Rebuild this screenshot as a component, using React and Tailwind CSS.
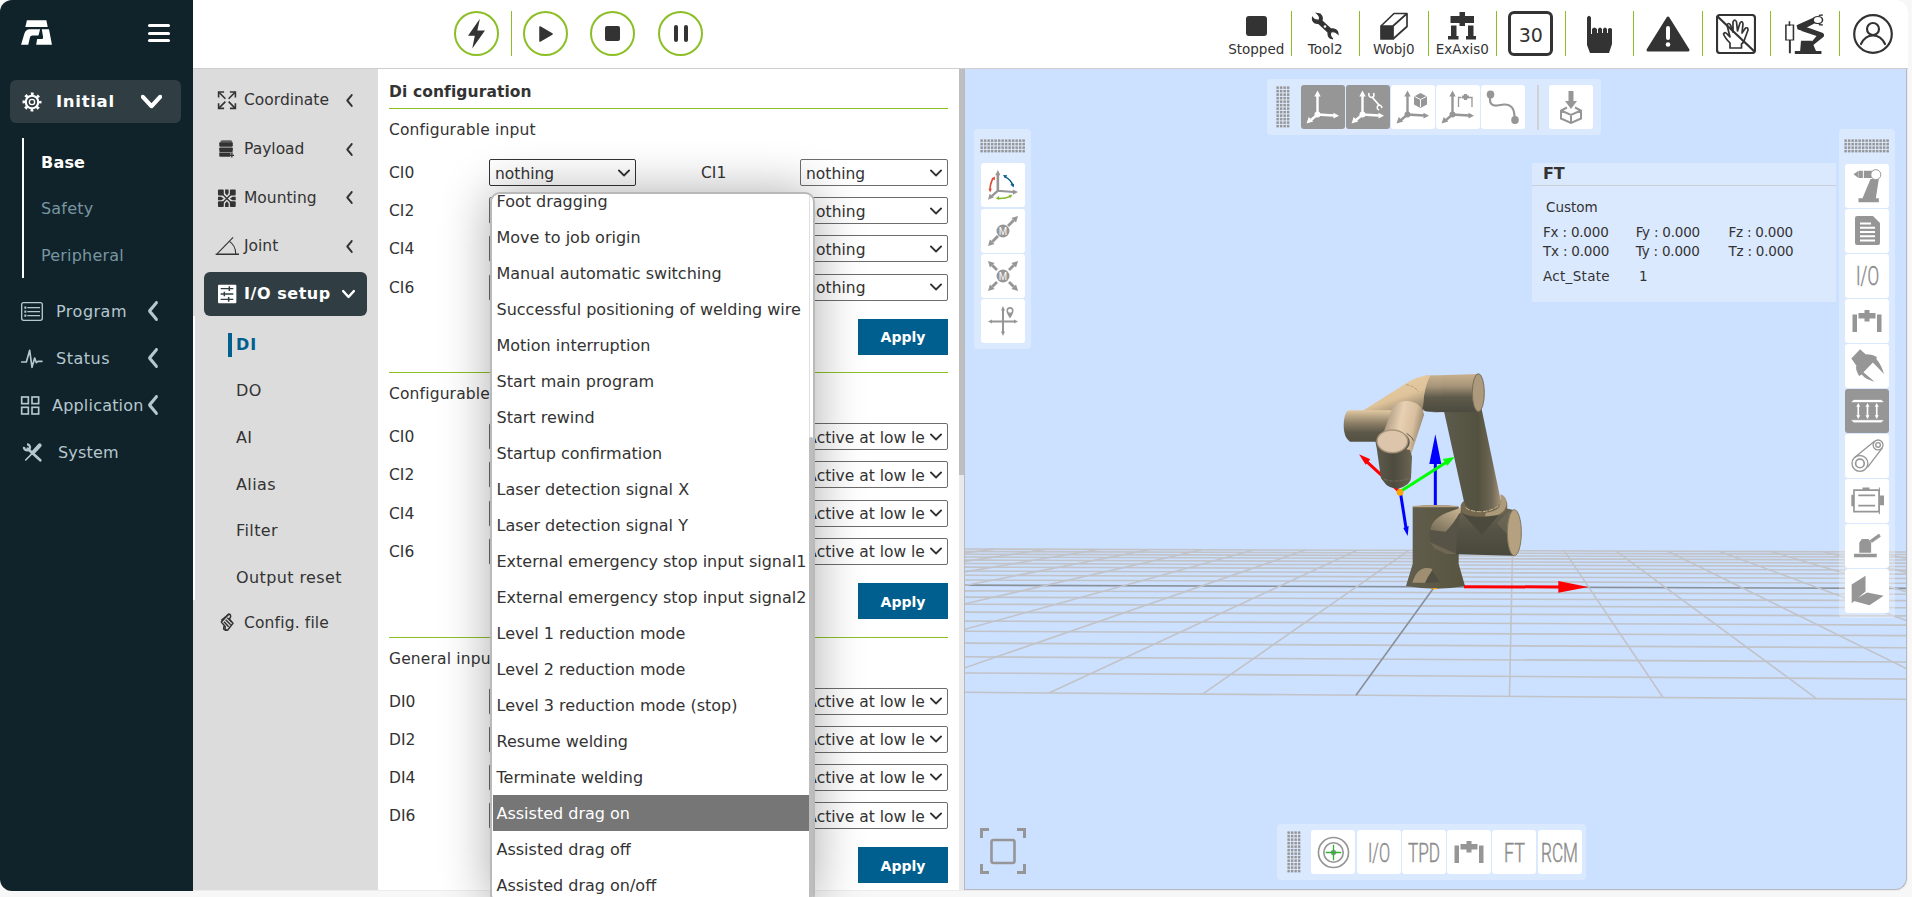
import React from "react";

const G = "#969696";
const D = "#333333";

/* ---------- shared bits ---------- */
function Chevron({ className, dir = "left", w = 3 }) {
  return (
    <svg viewBox="0 0 24 24" className={className} fill="none" stroke="currentColor" strokeWidth={w} strokeLinecap="round" strokeLinejoin="round" preserveAspectRatio="none">
      {dir === "left" ? <path d="M18 2 L6 12 L18 22" /> : <path d="M2 6 L12 18 L22 6" />}
    </svg>
  );
}

/* ---------- left navigation ---------- */
const ProgramIcon = () => (
  <svg viewBox="60 30 72 64" className="w-6 h-[21.3px]" fill="none" stroke="currentColor" strokeWidth="4">
    <rect x="65" y="35" width="62" height="53" rx="6" />
    <path d="M73 50h6M73 62h6M73 74h6" strokeWidth="7" />
    <path d="M82 50h38M82 62h38M82 74h38" strokeWidth="3.5" />
  </svg>
);
const StatusIcon = () => (
  <svg viewBox="60 170 72 64" className="w-6 h-[21.3px]" fill="none" stroke="currentColor" strokeWidth="5" strokeLinejoin="round" strokeLinecap="round">
    <path d="M65 212h14l10-35 7 51 8-28 5 14 5-4h12" />
  </svg>
);
const AppIcon = () => (
  <svg viewBox="60 312 72 64" className="w-6 h-[21.3px]" fill="none" stroke="currentColor" strokeWidth="5">
    <rect x="65" y="318" width="20" height="20" />
    <rect x="96" y="318" width="20" height="20" />
    <rect x="65" y="349" width="20" height="20" />
    <rect x="96" y="349" width="20" height="20" />
  </svg>
);
const SystemIcon = () => (
  <svg viewBox="60 456 72 64" className="w-6 h-[21.3px]" fill="none" stroke="currentColor">
    <path d="M83 476 L121 511" strokeWidth="8" strokeLinecap="round" />
    <path d="M81 463 a9 9 0 1 1 -9 8" strokeWidth="7" />
    <path d="M77 510 L98 489" strokeWidth="5" strokeLinecap="round" />
    <path d="M98 489 L119 466" strokeWidth="12" strokeLinecap="round" />
  </svg>
);

function NavRow({ icon, label, arrow, pad }) {
  return (
    <div className="relative flex h-[47px] items-center pl-5 text-[#b5c7cf]">
      {icon}
      <span className={pad}>{label}</span>
      {arrow && <Chevron w={4.5} className="absolute left-[146px] top-[13px] h-[20px] w-[14px]" />}
    </div>
  );
}

function Sidebar() {
  return (
    <aside className="flex w-[193px] shrink-0 flex-col bg-[#11232a] text-[16px] tracking-[0.2px]">
      <div className="flex h-[80px] items-start justify-between pl-[21px] pr-[23px] pt-5">
        <svg viewBox="0 0 94 76" className="h-[25px] w-[31px]" fill="#fff">
          <path d="M18 1h59l4 20H13z" />
          <path d="M10 42q4-14 17-14h31l-5 19H35q-7 0-8 6l-5 22H0z" />
          <path d="M63 28h22l9 47H46l3-17h15q4 0 3-6z" />
        </svg>
        <div className="flex flex-col gap-[4.5px] pt-1">
          <div className="h-[3px] w-[22px] rounded bg-white" />
          <div className="h-[3px] w-[22px] rounded bg-white" />
          <div className="h-[3px] w-[22px] rounded bg-white" />
        </div>
      </div>
      <div className="ml-[10px] flex h-[43px] w-[171px] items-center rounded-md bg-[#303e43] pl-3 font-bold text-white">
        <svg viewBox="-12 -12 24 24" className="h-5 w-5" fill="none" stroke="#fff">
          <circle r="7.5" strokeWidth="2.6" />
          <circle r="3.2" strokeWidth="1.6" />
          <circle r="9.8" strokeWidth="3.2" strokeDasharray="3.4 4.3" strokeDashoffset="1.7" />
        </svg>
        <span className="w-[99px] pl-[14px] text-[16.5px] tracking-[0.7px]">Initial</span>
        <Chevron dir="down" w={5} className="h-[19px] w-[21px]" />
      </div>
      <div className="ml-[22px] mt-[15px] flex h-[140px] flex-col border-l-2 border-white pl-[17px] text-[#7796a1]">
        <div className="h-[47px] pt-[13px] font-bold text-white">Base</div>
        <div className="h-[47px] pt-[12px]">Safety</div>
        <div className="pt-[12px]">Peripheral</div>
      </div>
      <div className="pt-[10px]">
        <NavRow icon={<ProgramIcon />} label="Program" arrow pad="pl-3 tracking-[0.5px]" />
        <NavRow icon={<StatusIcon />} label="Status" arrow pad="pl-3 tracking-[0.5px]" />
        <NavRow icon={<AppIcon />} label="Application" arrow pad="pl-[8px]" />
        <NavRow icon={<SystemIcon />} label="System" pad="pl-[14px]" />
      </div>
    </aside>
  );
}

/* ---------- second level menu ---------- */
const CoordIcon = () => (
  <svg viewBox="650 270 62 60" className="h-5 w-5" fill="none" stroke={D} strokeWidth="5">
    <path d="M655 292V275h17M690 275h17v17M707 310v16h-17M672 326h-17v-16" />
    <path d="M656 276l20 20M706 276l-20 20M706 325l-20-20M656 325l20-20" />
  </svg>
);
const PayloadIcon = () => (
  <svg viewBox="650 414 62 60" className="h-5 w-5" fill={D}>
    <path d="M660 424q0-7 7-7h24q7 0 7 7z" opacity=".75" />
    <rect x="657" y="423" width="42" height="14" rx="3" />
    <rect x="657" y="439" width="42" height="14" rx="3" />
    <path d="M657 455h42v3h-8v10h-31q-3 0-3-3z" />
    <path d="M696 457v13M689 464h14" stroke={D} strokeWidth="4" />
  </svg>
);
const MountIcon = () => (
  <svg viewBox="650 560 62 60" className="h-5 w-5" fill={D}>
    <rect x="653" y="564" width="18" height="18" rx="3" />
    <rect x="690" y="564" width="18" height="18" rx="3" />
    <rect x="653" y="600" width="18" height="18" rx="3" />
    <rect x="690" y="600" width="18" height="18" rx="3" />
    <path d="M675 564h11v11l-5 7-6-7zM675 618h11v-11l-5-7-6 7zM653 586v11h10l8-5-8-6zM708 586v11h-10l-8-5 8-6z" />
    <path d="M668 579l25 25M693 579l-25 25" stroke={D} strokeWidth="4" />
  </svg>
);
const JointIcon = () => (
  <svg viewBox="643 705 76 60" className="h-5 w-[25px]" fill="none" stroke={D}>
    <path d="M645 760h71" strokeWidth="4.5" />
    <path d="M650 758l48-49" strokeWidth="3.5" />
    <path d="M687 721q19 13 19 38" strokeWidth="3.5" />
  </svg>
);
const IoIcon = () => (
  <svg viewBox="650 850 60 60" className="h-5 w-5">
    <rect x="653" y="852" width="55" height="56" rx="3" fill="#fff" />
    <path d="M661 864h38M661 880h38M661 896h38" stroke="#303e43" strokeWidth="4" />
    <path d="M687 857v14M672 873v14M685 889v14" stroke="#303e43" strokeWidth="4.5" />
  </svg>
);
const ConfigIcon = () => (
  <svg viewBox="650 965 60 60" className="h-5 w-5" fill="none" stroke={D} strokeWidth="4.5" strokeLinejoin="round">
    <path d="M685 968q6 0 6 8l-4 8 11 12-16 20q-6 2-8-5l1-5-12-14z" />
    <path d="M663 987l22-18M671 991l14 15M676 985l15 15M671 1004l-1 9q4 5 10 3M681 979l13 13" />
  </svg>
);

function MenuRow({ icon, label, arrow, tight, h = "h-[48.7px]" }) {
  return (
    <div className={"flex items-center text-[#333] " + h}>
      <div className={tight ? "w-[29px]" : "w-[27px]"}>{icon}</div>
      <span className="w-[101px]">{label}</span>
      {arrow && <Chevron w={4.5} className="h-[13px] w-[9px]" />}
    </div>
  );
}

function SubMenu() {
  return (
    <div className="w-[185px] shrink-0 bg-[#dcdcdc]">
      <div className="flex h-[203px] flex-col pl-[24px] pt-[7px]">
        <MenuRow icon={<CoordIcon />} label="Coordinate" arrow />
        <MenuRow icon={<PayloadIcon />} label="Payload" arrow />
        <MenuRow icon={<MountIcon />} label="Mounting" arrow />
        <div className="-ml-[2px]"><MenuRow icon={<JointIcon />} label="Joint" arrow tight /></div>
      </div>
      <div className="ml-[11px] flex h-[44px] w-[163px] items-center rounded-md bg-[#303e43] pl-[13px] font-bold text-white">
        <IoIcon />
        <span className="w-[105px] whitespace-nowrap pl-[7px] text-[16px] tracking-[0.55px]">I/O setup</span>
        <Chevron dir="down" w={4.5} className="h-[12px] w-[13px]" />
      </div>
      <div className="flex h-[284px] flex-col border-l-2 border-white pl-[33px] pt-[5px] text-[16px] text-[#333]">
        <div className="mt-3 flex h-6 items-center border-l-4 border-[#005f8f] pl-[4px] font-bold tracking-[1px] text-[#005f8f]">DI</div>
        <div className="flex flex-col pl-2 pt-[11px]">
          {["DO", "AI", "Alias", "Filter", "Output reset"].map((t) => (
            <div key={t} className="flex h-[46.7px] items-center tracking-[0.4px]">{t}</div>
          ))}
        </div>
      </div>
      <div className="pl-[24px] tracking-[0.15px]">
        <MenuRow icon={<ConfigIcon />} label="Config. file" h="h-[45px]" />
      </div>
    </div>
  );
}

/* ---------- configuration panel ---------- */
function Select({ value, dark }) {
  return (
    <div className={"flex h-[27px] items-center justify-between rounded-[2px] border bg-white pl-[5px] pr-[5px] text-[#333] " + (dark ? "w-[147px] border-[#333]" : "w-[148px] border-[#6d6d6d]")}>
      <span className="w-[119px] overflow-hidden whitespace-nowrap pt-[2px]">{value}</span>
      <Chevron dir="down" w={4.5} className="h-[10px] w-[12px] shrink-0" />
    </div>
  );
}

function Section({ title, labels, value, second }) {
  return (
    <div className="flex h-[264.3px] flex-col border-b border-[#8cbf26]">
      <div className="h-[50px] pt-[9px] tracking-[0.15px]">{title}</div>
      {labels.map((l, i) => (
        <div key={l} className="flex h-[38.2px] shrink-0 items-start">
          <span className="w-[100px] pt-[2px]">{l}</span>
          <Select value={i === 0 && second ? value : ""} dark={i === 0 && second} />
          <span className="w-[164px] pl-[65px] pt-[2px]">{i === 0 && second ? "CI1" : ""}</span>
          <Select value={value} />
        </div>
      ))}
      <div className="ml-auto mt-[7px] flex h-[36px] w-[90px] items-center justify-center bg-[#005f8f] pt-px text-[14px] font-bold text-white">Apply</div>
    </div>
  );
}

const OPTIONS = [
  "Foot dragging", "Move to job origin", "Manual automatic switching", "Successful positioning of welding wire",
  "Motion interruption", "Start main program", "Start rewind", "Startup confirmation", "Laser detection signal X",
  "Laser detection signal Y", "External emergency stop input signal1", "External emergency stop input signal2",
  "Level 1 reduction mode", "Level 2 reduction mode", "Level 3 reduction mode (stop)", "Resume welding",
  "Terminate welding", "Assisted drag on", "Assisted drag off", "Assisted drag on/off",
];

function OptionList() {
  return (
    <div className="absolute left-[489.5px] top-[192px] z-20 flex h-[712px] w-[325px] overflow-hidden rounded-[10px] border-2 border-[#b9b9b9] bg-white shadow-[0_0_50px_rgba(0,0,0,0.33)]">
      <ul className="-mt-[11px] w-[318px] pl-px text-[16px] text-[#333]">
        {OPTIONS.map((o) => (
          <li key={o} className={"flex h-9 items-center whitespace-nowrap pl-1 pt-[2px] " + (o === "Assisted drag on" ? "bg-[#767676] text-white" : "")}>{o}</li>
        ))}
      </ul>
      <div className="flex w-[4px] flex-col border-l border-[#e0e0e0] pt-[243px]">
        <div className="-ml-px w-[4px] grow rounded-t bg-[#bdbdbd]" />
      </div>
    </div>
  );
}

function ConfigPanel() {
  return (
    <div className="flex w-[586px] shrink-0 overflow-hidden bg-white text-[#333]">
      <div className="w-[581px] shrink-0 pl-[11px] pr-[11px]">
        <div className="flex h-[40px] items-center border-b border-[#8cbf26] pt-[7px] text-[15.5px] font-bold tracking-[0.1px]">Di configuration</div>
        <Section title="Configurable input" labels={["CI0", "CI2", "CI4", "CI6"]} value="nothing" second />
        <Section title="Configurable input" labels={["CI0", "CI2", "CI4", "CI6"]} value="Active at low level" />
        <div className="h-[250px] overflow-hidden">
          <Section title="General input" labels={["DI0", "DI2", "DI4", "DI6"]} value="Active at low level" />
        </div>
      </div>
      <div className="w-[5px] bg-[#e9e9e9]">
        <div className="h-[406px] bg-[#bfbfbf]" />
      </div>
    </div>
  );
}

/* ---------- top bar ---------- */
function Round({ children, className }) {
  return (
    <div className={"flex h-[45px] w-[45px] items-center justify-center rounded-full border-2 border-[#8cbf26] " + className}>{children}</div>
  );
}

function Cell({ children, first }) {
  return (
    <div className={"flex h-[45px] w-[68.5px] shrink-0 flex-col items-center justify-center " + (first ? "" : "border-l border-[#8cbf26]")}>{children}</div>
  );
}

function Labeled({ icon, label }) {
  return (
    <div className="flex flex-col items-center pt-[3px]">
      <div className="flex h-[28px] items-center">{icon}</div>
      <div className="text-[13.5px] leading-[18px] text-[#333]">{label}</div>
    </div>
  );
}

function TopBar() {
  return (
    <header className="flex h-[69px] shrink-0 border-b border-[#d0cdd0] bg-white pt-[11px]">
      <Round className="ml-[261px]">
        <svg viewBox="0 0 20 36" className="h-[34px] w-[17px]" fill={D}><path d="M14 0 L0 20 H8 L5 35 L20 14 H11 Z" /></svg>
      </Round>
      <div className="ml-[12px] h-[45px] w-px bg-[#8cbf26]" />
      <Round className="ml-[11px]">
        <svg viewBox="0 0 14 16" className="h-[16px] w-[14px]" fill={D} stroke={D} strokeWidth="1.5" strokeLinejoin="round"><path d="M1 1 L13 8 L1 15Z" /></svg>
      </Round>
      <Round className="ml-[22px]"><div className="h-[15px] w-[15px] rounded-[2px] bg-[#333]" /></Round>
      <Round className="ml-[23px]">
        <div className="flex gap-[6px]"><div className="h-[17px] w-[4px] rounded bg-[#333]" /><div className="h-[17px] w-[4px] rounded bg-[#333]" /></div>
      </Round>
      <div className="ml-auto flex w-[686px]">
        <Cell first><Labeled label="Stopped" icon={<div className="h-5 w-[21px] rounded-[3px] bg-[#333]" />} /></Cell>
        <Cell>
          <Labeled label="Tool2" icon={
            <svg viewBox="0 0 28 28" className="h-[28px] w-[28px]" fill="none" stroke={D}>
              <path d="M8 9 L20 20" strokeWidth="5.5" />
              <path d="M6 1.5 Q10 5 8 8 Q4 9 1.5 5.5 Q1 9 4 11 Q8 12 10 10 Q13 6 9 2Z M22 27 Q18 24 20 20 Q24 19 27 22 Q27 18 23 17 Q19 16 17.500 19 Q16 24 19 26Z" fill={D} strokeWidth="1.2" />
              <circle cx="14" cy="14.500" r="1.300" fill="#fff" stroke="none" />
            </svg>} />
        </Cell>
        <Cell>
          <Labeled label="Wobj0" icon={
            <svg viewBox="0 0 28 28" className="h-[28px] w-[28px]" fill="none" stroke={D} strokeWidth="1.700" strokeLinejoin="round">
              <rect x="1" y="14" width="12" height="13" fill={D} />
              <path d="M1 14 L14 1.500 H27 V14.500 L13 27 M13 14 L27 1.500" />
            </svg>} />
        </Cell>
        <Cell>
          <Labeled label="ExAxis0" icon={
            <svg viewBox="0 0 28 28" className="h-[28px] w-[28px]" fill={D}>
              <path d="M11.500 0h5.500v4h9v7h-9v3h-5.500v-3H2.500V4h9zM3 13.500h5.500v10.500h2v3.500H0v-3.500h3zM20 13.500h5.500v10.500H28v3.500H18v-3.500h2z" />
            </svg>} />
        </Cell>
        <Cell>
          <div className="flex h-[45px] w-[45px] items-center justify-center rounded-md border-[3px] border-[#333] pt-[2px] text-[19px] text-[#333]">30</div>
        </Cell>
        <Cell>
          <svg viewBox="0 0 26 38" className="h-[38px] w-[26px]" fill={D}>
            <path d="M1 2.500Q3 -1 5 2.500V19h1V14q2-3 5 0v4h1v-4q2-3 4 0v4h1v-4q2-3 4 0v4h1v-4q2-2 4 0V29L23 38H4L1 30z" />
          </svg>
        </Cell>
        <Cell>
          <svg viewBox="0 0 44 36" className="h-[36px] w-[44px]">
            <path d="M22 2 L42 34 H2 Z" fill={D} stroke={D} strokeWidth="3" strokeLinejoin="round" />
            <path d="M22 12v10" stroke="#fff" strokeWidth="4" strokeLinecap="round" />
            <circle cx="22" cy="28.500" r="2.300" fill="#fff" />
          </svg>
        </Cell>
        <Cell>
          <svg viewBox="0 0 40 40" className="h-10 w-10" fill="none" stroke={D} strokeWidth="1.700" strokeLinejoin="round">
            <rect x="1" y="1" width="38" height="38" rx="3" strokeWidth="2.200" />
            <path d="M14 34 V29 Q9 24 7.500 20 Q9 17 12 21 L14 23 L11 11 Q12.500 8 14.500 11 L17 18 L17 8 Q19 4 20.500 8 L21.500 17 L24 9 Q26.500 6 27 10 L26 19 L29.500 14 Q32 13 32 16 L28 27 Q27 29 25.500 30 V34 Z" />
            <path d="M1 2 L39 38" strokeWidth="2.200" />
          </svg>
        </Cell>
        <Cell>
          <svg viewBox="1286 42 90 120" className="h-10 w-10" fill={D} preserveAspectRatio="none">
            <path d="M1288 75h17v45h-17zM1296 64v14" fill="none" stroke={D} strokeWidth="3.500" />
            <path d="M1297 120v40" stroke={D} strokeWidth="4.500" />
            <path d="M1308 153h60v9h-60zM1322 122h24l10 32h-36z" />
            <path d="M1312 76l40-24 6 14-30 22q-8 4-14 0z" />
            <path d="M1318 76l22 8 30 14q6 4 3 12l-24 26h-6l4-12 10-16-32-14-10-8z" />
            <circle cx="1360" cy="60" r="10.500" fill="#fff" stroke={D} strokeWidth="3.500" />
            <path d="M1362 46l9-1M1362 74l9 1" stroke={D} strokeWidth="4" />
          </svg>
        </Cell>
        <Cell>
          <svg viewBox="0 0 40 40" className="h-10 w-10" fill="none" stroke={D} strokeWidth="2.200">
            <circle cx="20" cy="20" r="18.800" />
            <circle cx="20" cy="15" r="6" />
            <path d="M8 30 Q12 21.500 20 21.500 Q28 21.500 32 30" strokeLinecap="round" />
          </svg>
        </Cell>
      </div>
    </header>
  );
}

/* ---------- 3D scene ---------- */
const X0 = 965, X1 = 1906;
function rowY(i, near, far, h) {
  const a = 1 / (near - h), b = 1 / (far - h);
  return h + 1 / (a + ((b - a) * i) / 20);
}

function Scene() {
  const rows = Array.from({ length: 21 }, (_, i) => [rowY(i, 692.3, 549, 476), rowY(i, 699.3, 552, 480)]);
  const cols = Array.from({ length: 21 }, (_, i) => {
    const k = i - 11;
    const xn = 1509.5 + 153.5 * k, xf = 1512.5 + 51.8 * k;
    return [xn, 692.3 + ((xn - X0) * 7) / 941, xf, 549 + ((xf - X0) * 3) / 941];
  });
  return (
    <svg viewBox="965 69 941 820" className="h-[820px] w-[941px]">
      <defs>
        <linearGradient id="h1" x1="0" y1="0" x2="0" y2="1">
          <stop offset="0" stopColor="#c8b08c" /><stop offset=".3" stopColor="#a8967a" /><stop offset=".6" stopColor="#5f5b4c" /><stop offset="1" stopColor="#4b4a3f" />
        </linearGradient>
        <linearGradient id="h2" x1="0" y1="0" x2="0" y2="1">
          <stop offset="0" stopColor="#e0c8a2" /><stop offset=".4" stopColor="#8e8068" /><stop offset=".7" stopColor="#5d594a" /><stop offset="1" stopColor="#545141" />
        </linearGradient>
        <linearGradient id="d1" x1="0" y1="0" x2=".5" y2="1">
          <stop offset="0" stopColor="#ecd1a6" /><stop offset=".6" stopColor="#dfc49b" /><stop offset="1" stopColor="#7d725e" />
        </linearGradient>
        <linearGradient id="u1" x1="0" y1="0" x2="1" y2="0">
          <stop offset="0" stopColor="#5d5b4c" /><stop offset=".6" stopColor="#53513f" /><stop offset=".85" stopColor="#6e6755" /><stop offset="1" stopColor="#a18f74" />
        </linearGradient>
        <linearGradient id="w1" x1="0" y1=".3" x2="1" y2=".6">
          <stop offset="0" stopColor="#a59378" /><stop offset=".4" stopColor="#e8d0b4" /><stop offset=".7" stopColor="#d8bf9e" /><stop offset="1" stopColor="#7f735d" />
        </linearGradient>
        <linearGradient id="w2" x1="0" y1="0" x2="1" y2="0">
          <stop offset="0" stopColor="#5e5b4b" /><stop offset=".5" stopColor="#4d4b3f" /><stop offset="1" stopColor="#6b6451" />
        </linearGradient>
        <linearGradient id="b1" x1="0" y1="0" x2="1" y2="0">
          <stop offset="0" stopColor="#615e4e" /><stop offset="1" stopColor="#57543f" />
        </linearGradient>
        <linearGradient id="s1" x1="0" y1="0" x2="0" y2="1">
          <stop offset="0" stopColor="#6a6452" /><stop offset=".5" stopColor="#545244" /><stop offset="1" stopColor="#48483c" />
        </linearGradient>
        <linearGradient id="l1" x1="1" y1="0" x2=".2" y2="1">
          <stop offset="0" stopColor="#d6bf9b" /><stop offset="1" stopColor="#7b715c" />
        </linearGradient>
      </defs>
      <g stroke="#c1c3c7" strokeWidth="1.6" fill="none">
        {rows.map((r, i) => <line key={i} x1={X0} y1={r[0]} x2={X1} y2={r[1]} stroke={i === 10 ? "#8b9096" : undefined} />)}
        {cols.map((c, i) => <line key={i} x1={c[0]} y1={c[1]} x2={c[2]} y2={c[3]} stroke={i === 10 ? "#8b9096" : undefined} />)}
      </g>
      <g transform="translate(1300 350) scale(0.33333)">
        <path d="M406 470V335" stroke="#00f" strokeWidth="9" />
        <path d="M406 253l18 89h-36z" fill="#00f" />
        <path d="M295 422L196 331" stroke="#f00" strokeWidth="9" />
        <path d="M177 313l34 15-14 16z" fill="#f00" />
        {/* base and shoulder */}
        <path d="M338 470q68-8 138 0V642L495 708Q410 724 318 708L338 642z" fill="url(#b1)" />
        <path d="M338 468q68-6 138 0l-2 4H338z" fill="#b7a384" />
        <path d="M392 540Q392 510 440 488L482 473 500 470 480 545Q440 548 392 540z" fill="url(#l1)" />
        <path d="M478 490Q462 520 436 546L388 540 392 580 468 613 560 600V490z" fill="#575447" />
        <path d="M470 560L484 470H600L640 480V617L468 613z" fill="url(#s1)" />
        <path d="M388 576L470 612H440L405 596z" fill="#6d6754" />
        <path d="M337 698Q350 655 380 654 402 654 396 662 382 680 375 698z" fill="#a08e72" />
        <path d="M396 662l24 34-44 3z" fill="#504e41" />
        <path d="M590 520L630 480V560z" fill="#77705b" opacity=".5" />
        <ellipse cx="643" cy="548" rx="21" ry="69" fill="#b5a080" stroke="#82765f" strokeWidth="3" />
        {/* upper arm */}
        <path d="M482 475Q480 455 500 450H600Q622 440 622 468 622 490 590 498 560 506 520 501 485 495 482 475z" fill="#74694f" />
        <path d="M553 503q62-5 67-40 0-25-18-30l-2 35q-10 17-42 20z" fill="#ad9a7b" />
        <path d="M486 490q35 18 110 5l-50 60z" fill="#4b4a3d" />
        <path d="M432 184L545 178 600 440V462Q570 490 530 485 500 482 492 455z" fill="url(#u1)" />
        <path d="M497 473q15 12 45 12t58-20" fill="none" stroke="#cbb491" strokeWidth="3" strokeDasharray="14 4" />
        {/* elbow */}
        <path d="M375 77L535 72V184Q450 190 375 184L340 140z" fill="url(#h1)" />
        <ellipse cx="535" cy="128" rx="18" ry="57" fill="#ad997b" stroke="#786d58" strokeWidth="3" />
        {/* forearm */}
        <path d="M188 182L315 102Q350 78 392 76 372 110 370 165L368 184 290 210 240 212z" fill="url(#d1)" />
        <path d="M392 76Q376 100 374 150L365 180Q395 190 425 186V78z" fill="url(#h1)" opacity=".55" />
        <path d="M318 104q25 3 38 22" fill="none" stroke="#a18c6a" strokeWidth="2" strokeDasharray="10 4" />
        <path d="M146 181H282L300 215 246 275H150Q131 262 131 228 131 188 146 181z" fill="url(#h2)" />
        {/* wrist */}
        <path d="M278 172Q295 150 325 153 368 160 372 195L331 320 300 330 250 250z" fill="url(#w1)" />
        <path d="M228 280L330 300 336 320 333 385Q332 405 295 416 262 414 252 396L243 385z" fill="url(#w2)" />
        <ellipse cx="278" cy="277" rx="51" ry="35" fill="#59564a" />
        <ellipse cx="277" cy="274" rx="46" ry="34" fill="#dcc5aa" stroke="#a8967b" strokeWidth="4" />
        <path d="M320 250q18 12 21 22" stroke="#5f5b4b" strokeWidth="3" fill="none" />
        <path d="M252 388q35 12 78-4" stroke="#80765f" strokeWidth="2" fill="none" strokeDasharray="12 4" />
        {/* axes */}
        <path d="M300 425L440 336" stroke="#0f0" strokeWidth="9" />
        <path d="M464 321l-22 26-14-20z" fill="#0f0" />
        <path d="M302 432L319 540" stroke="#00f" strokeWidth="9" />
        <path d="M323 558l-13-24 16-6z" fill="#00f" />
        <circle cx="300" cy="427" r="10" fill="#ffa500" />
        <path d="M492 710L780 711" stroke="#f00" strokeWidth="9" />
        <path d="M775 693l90 18-90 17z" fill="#f00" />
        <path d="M398 716h13" stroke="#ffa500" strokeWidth="4" />
      </g>
    </svg>
  );
}

/* ---------- floating tool bars ---------- */
function Grip({ cols, rows }) {
  const w = cols * 3.5, h = rows * 3.5;
  return (
    <svg width={w} height={h} viewBox={"0 0 " + w + " " + h}>
      {Array.from({ length: cols * rows }, (_, i) => (
        <rect key={i} x={(i % cols) * 3.5 + 0.4} y={Math.floor(i / cols) * 3.5 + 0.4} width="2.500" height="2.500" fill={G} />
      ))}
    </svg>
  );
}

function Tool({ children, active }) {
  return (
    <div className={"flex h-[44px] w-[44px] shrink-0 items-center justify-center rounded-[3px] " + (active ? "bg-[#969696]" : "bg-white")}>{children}</div>
  );
}

function Axes({ c = G, children }) {
  return (
    <svg viewBox="0 0 34 34" className="h-[34px] w-[34px]" fill="none" stroke={c}>
      <path d="M11.500 5V24.500L28 25.500M11.500 24.500L5 30" strokeWidth="2.400" />
      <path d="M11.500 0.500l3.200 6h-6.400zM33 25.800l-5.500 2.800v-5.800zM0.500 33.500l2.200-6.500 4.600 4.600z" fill={c} stroke="none" />
      <circle cx="11.500" cy="24.500" r="3" fill={c} stroke="none" />
      {children}
    </svg>
  );
}

const Ext = () => (
  <svg viewBox="0 0 30 22" className="h-[22px] w-[30px]" fill={G}>
    <path d="M0.500 4.500h4.500v17.500H0.500zM25 4.500h4.500v17.500H25zM6.500 3h6V0h5v3h6v5.500h-6V11.500h-5V8.500h-6z" />
  </svg>
);

function Thin({ t, w, h = 19 }) {
  return (
    <svg width={w} height={h} viewBox={"0 0 " + w + " " + h} className="overflow-visible">
      <text x="0" y={h} textLength={w} lengthAdjust="spacingAndGlyphs" fontFamily="Roboto, sans-serif" fontSize={h * 1.4} fontWeight="300" fill="#8c8c8c" stroke="#8c8c8c" strokeWidth=".5">{t}</text>
    </svg>
  );
}

function TopTools() {
  return (
    <div className="absolute left-[302px] top-[10px] flex h-[56px] w-[334px] items-center gap-px rounded bg-white/30 pl-[9px]">
      <div className="mr-[10px]"><Grip cols={4} rows={12} /></div>
      <Tool active><Axes c="#fff" /></Tool>
      <Tool active>
        <Axes c="#fff">
          <path d="M21 7l7 8" strokeWidth="1.800" />
          <path d="M18 3q-1 4 3 4.500 3-1 1.500-4.500M31 18q-1-4-4-2.500-2 3 1 4.500" strokeWidth="1.600" />
        </Axes>
      </Tool>
      <Tool><Axes><path d="M24.500 3l6.500 3.500v8L24.500 18l-6.500-3.500v-8z" fill={G} stroke="none" /><path d="M18.500 6.500l6 3 6-3M24.500 9.500V17" stroke="#fff" strokeWidth="1" /></Axes></Tool>
      <Tool><Axes><path d="M17.500 17V7.500h3M31 17V7.500h-3" strokeWidth="1.300" /><path d="M21 7h7M24.500 4v6" strokeWidth="3.200" /></Axes></Tool>
      <Tool>
        <svg viewBox="0 0 34 34" className="h-[34px] w-[34px]" fill="none" stroke={G} strokeWidth="2.200">
          <path d="M4 5V10Q4 16 11 15.500L18 14.500Q28 14 28.500 26V29" />
          <ellipse cx="4.500" cy="4.500" rx="3.800" ry="4" fill={G} stroke="none" /><ellipse cx="29" cy="30" rx="3.800" ry="4" fill={G} stroke="none" />
        </svg>
      </Tool>
      <div className="ml-[11px] mr-[9px] h-[45px] w-[2px] bg-[#cfd3d8]" />
      <Tool>
        <svg viewBox="0 0 24 34" className="h-[34px] w-[24px]" fill="none" stroke={G} strokeWidth="2">
          <path d="M8 17.500L2 20.500v8l10 4.500L22 28.500v-8l-6-3M2 20.500l10 4.500L22 20.500M12 25V33" />
          <path d="M9.500 1h5v10h3.500L12 19l-6-8h3.500z" fill={G} stroke="none" />
        </svg>
      </Tool>
    </div>
  );
}

const Arrow = ({ x1, y1, x2, y2 }) => {
  const a = Math.atan2(y2 - y1, x2 - x1), c = Math.cos(a), s = Math.sin(a);
  const bx = x2 - 6 * c, by = y2 - 6 * s;
  return (
    <g>
      <line x1={x1} y1={y1} x2={bx} y2={by} stroke={G} strokeWidth="2.800" />
      <path d={`M${x2} ${y2}L${bx - 3.3 * s} ${by + 3.3 * c}L${bx + 3.3 * s} ${by - 3.3 * c}Z`} fill={G} />
    </g>
  );
};

const Motor = () => (
  <g>
    <circle cx="15" cy="15" r="6.500" fill={G} />
    <text x="15" y="18.600" textAnchor="middle" fontSize="10" fill="#fff" fontFamily="Liberation Sans, sans-serif">M</text>
  </g>
);

function LeftTools() {
  return (
    <div className="absolute left-[9px] top-[60px] flex h-[220px] w-[57px] flex-col items-center gap-[1.300px] rounded bg-white/30 pt-[10px]">
      <div className="mb-[8px] h-[15px]"><Grip cols={13} rows={4} /></div>
      <Tool>
        <svg viewBox="68 298 70 94" className="h-[31px] w-[30px]" fill="none" stroke={G} preserveAspectRatio="none">
          <path d="M91 312V361L128 365M91 361L76 378" strokeWidth="6" />
          <path d="M91 298l6 16h-12zM138 365l-12 8v-16zM68 388l4-18 10 11z" fill={G} stroke="none" />
          <path d="M80 322Q72 342 73 360" stroke="#e04b3a" strokeWidth="4" />
          <path d="M76 324l8-6 0 11zM69 355l8 0-4 11z" fill="#e04b3a" stroke="none" />
          <path d="M106 317Q122 327 126 346" stroke="#0b5f8f" strokeWidth="4" />
          <path d="M103 313l10 1-5 10zM120 342l9 -2-1 11z" fill="#0b5f8f" stroke="none" />
          <path d="M90 384Q106 386 122 377" stroke="#84b92a" strokeWidth="4" />
          <path d="M86 384l8-7v12zM125 374l-9-1 4 10z" fill="#84b92a" stroke="none" />
        </svg>
      </Tool>
      <Tool><svg viewBox="0 0 30 30" className="h-[30px] w-[30px]"><Arrow x1={20} y1={10} x2={30} y2={0} /><Arrow x1={10} y1={20} x2={0} y2={30} /><Motor /></svg></Tool>
      <Tool><svg viewBox="0 0 30 30" className="h-[30px] w-[30px]"><Arrow x1={21} y1={9} x2={30} y2={0} /><Arrow x1={9} y1={21} x2={0} y2={30} /><Arrow x1={9} y1={9} x2={0} y2={0} /><Arrow x1={21} y1={21} x2={30} y2={30} /><Motor /></svg></Tool>
      <Tool>
        <svg viewBox="0 0 30 30" className="h-[30px] w-[30px]" fill="none" stroke={G} strokeWidth="2">
          <path d="M15 2V28M3 15.500H27" />
          <path d="M15 0l2 4.500h-4zM15 30l2-4.500h-4zM0 15.500l4-2v4zM30 15.500l-4-2v4z" fill={G} stroke="none" />
          <path d="M22 12.500q-3.500-5-3.500-8a3.500 3.500 0 0 1 7 0q0 3-3.500 8z" fill={G} stroke="none" />
          <circle cx="22" cy="4.800" r="2" fill="#fff" stroke="none" />
        </svg>
      </Tool>
    </div>
  );
}

function RightTools() {
  return (
    <div className="absolute left-[874px] top-[60px] flex h-[489px] w-[56px] flex-col items-center gap-[1px] rounded bg-white/30 pt-[10px]">
      <div className="mb-[8.500px] h-[15px]"><Grip cols={13} rows={4} /></div>
      <Tool>
        <svg viewBox="1060 145 86 102" className="h-[34px] w-[29px]" fill={G}>
          <path d="M1112 175h25l-9 58h9v12h-61v-12h12z" />
          <path d="M1061 161l14-10v20zM1076 150h13v22h-13zM1092 150h30v22h-30z" />
          <circle cx="1128" cy="162" r="15" fill="#fff" stroke={G} strokeWidth="3" />
        </svg>
      </Tool>
      <Tool>
        <svg viewBox="0 0 25 29" className="h-[29px] w-[25px]"><path d="M2 0H18L25 7V27q0 2-2 2H2q-2 0-2-2V2q0-2 2-2z" fill={G} /><path d="M5 7.500h11M5 11.800h15M5 16h15M5 20.200h15M5 24.500h15" stroke="#fff" strokeWidth="2" /></svg>
      </Tool>
      <Tool><Thin t="I/O" w={23} h={18} /></Tool>
      <Tool><Ext /></Tool>
      <Tool>
        <svg viewBox="1056 688 98 98" className="h-[33px] w-[33px]" fill={G}>
          <path d="M1083 689L1100 704Q1120 703 1133 712L1131 717Q1146 735 1154 762L1121 728L1093 757L1126 785Q1098 778 1088 764L1080 768Q1068 748 1072 738L1057 716Z" />
        </svg>
      </Tool>
      <Tool active>
        <svg viewBox="212 55 100 72" className="h-[24px] w-[33px]" fill="#fff" stroke="#fff">
          <path d="M214 64l6-6h84l6 6zM214 119h96l-6 6h-84z" strokeWidth="1" />
          {[234, 262, 290].map((x) => <g key={x}><path d={`M${x} 75v32`} strokeWidth="5" /><path d={`M${x} 67l6 11h-12zM${x} 115l6-11h-12z`} stroke="none" /></g>)}
        </svg>
      </Tool>
      <Tool>
        <svg viewBox="212 176 100 100" className="h-[33px] w-[33px]" fill="none" stroke={G} strokeWidth="4">
          <circle cx="239" cy="250" r="24" /><circle cx="239" cy="250" r="13" strokeWidth="5" />
          <circle cx="294" cy="194" r="15" /><circle cx="294" cy="194" r="7" />
          <path d="M222 233L284 182M262 262L307 203" />
        </svg>
      </Tool>
      <Tool>
        <svg viewBox="212 320 100 84" className="h-[28px] w-[33px]" fill={G}>
          <path d="M247 321h21v8h-21zM213 343h8v35h-8zM300 345h12v30h-12z" />
          <path d="M221 329h76v65h-76z" fill="none" stroke={G} strokeWidth="5" />
          <path d="M234 345h51M234 376h51" stroke={G} strokeWidth="5" /><path d="M298 321v81" stroke={G} strokeWidth="3" />
        </svg>
      </Tool>
      <Tool>
        <svg viewBox="220 460 86 76" className="h-[25px] w-[29px]" fill={G}>
          <path d="M222 523h69v11h-69zM238 520V490l8-12h20l8 12v30z" /><path d="M270 483l28-20 4 8-26 18z" stroke={G} strokeWidth="2" />
        </svg>
      </Tool>
      <Tool>
        <svg viewBox="213 584 100 94" className="h-[31px] w-[33px]" fill={G}>
          <path d="M215 613l42-27v48l-42 36zM262 637l50 10-43 29-50-14z" />
        </svg>
      </Tool>
    </div>
  );
}

function BottomTools() {
  return (
    <div className="absolute left-[312px] top-[755px] flex h-[56px] w-[309px] items-center gap-[1.300px] rounded bg-white/30 pl-[10px]">
      <div className="mr-[9px]"><Grip cols={4} rows={12} /></div>
      <Tool>
        <svg viewBox="0 0 34 34" className="h-[33px] w-[33px]" fill="none" stroke={G} strokeWidth="1.700">
          <circle cx="17" cy="17" r="15.500" /><circle cx="17" cy="17" r="10" /><circle cx="17" cy="17" r="2" fill={G} />
          <path d="M17 9V25M9 17H25" stroke="#2eb42e" strokeWidth="1.400" />
        </svg>
      </Tool>
      <Tool><Thin t="I/O" w={22} /></Tool>
      <Tool><Thin t="TPD" w={32} /></Tool>
      <Tool><Ext /></Tool>
      <Tool><Thin t="FT" w={21} /></Tool>
      <Tool><Thin t="RCM" w={37} /></Tool>
    </div>
  );
}

function ForcePanel() {
  const Row = ({ a }) => (
    <div className="flex h-[19px] items-center">
      {["x", "y", "z"].map((s) => <span key={s} className="w-[92.700px]">{a + s + " : 0.000"}</span>)}
    </div>
  );
  return (
    <div className="absolute left-[567px] top-[94px] h-[139px] w-[304px] bg-white/30 text-[13.500px] tracking-[-0.200px] text-[#333]">
      <div className="flex h-[23px] items-center border-b border-[#cbcfd6] pl-[11px] text-[16px] font-bold">FT</div>
      <div className="flex flex-col pl-[11px]">
        <div className="h-[36px] pl-[3px] pt-[12px] leading-[18px] tracking-normal">Custom</div>
        <Row a="F" />
        <Row a="T" />
        <div className="flex h-[31px] items-center tracking-[0.300px]"><span className="w-[96px]">Act_State</span>1</div>
      </div>
    </div>
  );
}

function Viewer() {
  return (
    <div className="relative h-[821px] w-[943px] shrink-0 overflow-hidden rounded-br-xl border-b border-l border-r border-[#b5b8be] bg-[#cce0ff]">
      <Scene />
      <TopTools />
      <LeftTools />
      <ForcePanel />
      <RightTools />
      <BottomTools />
      <svg viewBox="0 0 46 46" className="absolute left-[15px] top-[759px] h-[46px] w-[46px]" fill="none" stroke={G} strokeWidth="3">
        <path d="M1.500 10V1.500H9M37 1.500h7.500V10M44.500 36v8.500H37M9 44.500H1.500V36" />
        <rect x="11.500" y="12" width="23" height="23" rx="2" strokeWidth="2.600" />
      </svg>
    </div>
  );
}

export default function App() {
  return (
    <div className="relative h-[897px] w-[1912px] overflow-hidden bg-[#f7f7f7] font-['DejaVu_Sans',sans-serif] text-[15.500px] leading-6">
      <div className="flex h-[891px] w-[1908px] overflow-hidden rounded-xl bg-[#ececec]">
        <Sidebar />
        <div className="flex w-[1715px] flex-col">
          <TopBar />
          <div className="flex h-[821px]">
            <SubMenu />
            <ConfigPanel />
            <Viewer />
          </div>
        </div>
      </div>
      <OptionList />
    </div>
  );
}
